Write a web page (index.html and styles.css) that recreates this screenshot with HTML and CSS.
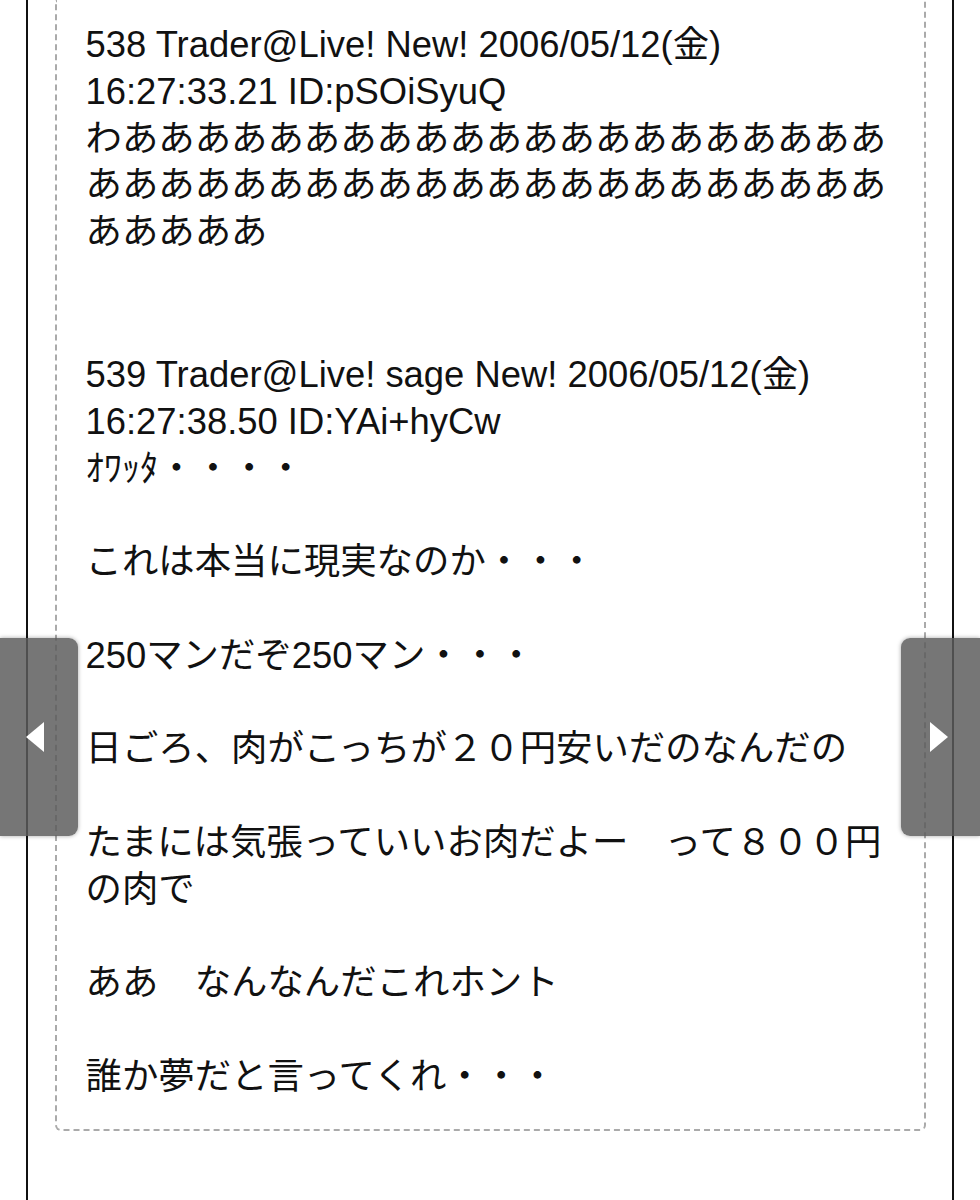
FILE: index.html
```html
<!DOCTYPE html>
<html lang="ja">
<head>
<meta charset="utf-8">
<title>538-539</title>
<link rel="stylesheet" href="styles.css">
</head>
<body>
<div class="frame">
  <div class="thread">
    <div class="post">
      <div class="head">538 Trader@Live! New! 2006/05/12(金) 16:27:33.21 ID:pSOiSyuQ</div>
      <div class="body">わああああああああああああああああああああああああああああああああああああああああああああああああ</div>
    </div>
    <div class="post post-next">
      <div class="head">539 Trader@Live! sage New! 2006/05/12(金) 16:27:38.50 ID:YAi+hyCw</div>
      <div class="body">ｵﾜｯﾀ・・・・<br><br>これは本当に現実なのか・・・<br><br>250マンだぞ250マン・・・<br><br>日ごろ、肉がこっちが２０円安いだのなんだの<br><br>たまには気張っていいお肉だよー　って８００円の肉で<br><br>ああ　なんなんだこれホント<br><br>誰か夢だと言ってくれ・・・</div>
    </div>
  </div>
</div>
<div class="nav nav-prev"><svg width="20" height="32" viewBox="0 0 20 32"><polygon points="1,16 19,1 19,31" fill="#fff"/></svg></div>
<div class="nav nav-next"><svg width="20" height="32" viewBox="0 0 20 32"><polygon points="19,16 1,1 1,31" fill="#fff"/></svg></div>
</body>
</html>
```
FILE: styles.css
```css
html, body {
  margin: 0;
  padding: 0;
  background: #fff;
}
body {
  font-family: "Liberation Sans", "Noto Sans CJK JP", sans-serif;
  font-size: 36.4px;
  line-height: 46.8px;
  color: #111;
  overflow: hidden;
  height: 1200px;
}
.frame {
  margin-left: 26px;
  width: 928px;
  box-sizing: border-box;
  min-height: 1200px;
  border-left: 2.5px solid #111;
  border-right: 2.5px solid #111;
  padding: 0 26px 0 26.5px;
}
.thread {
  border: 2px dashed #aaa;
  border-top: none;
  border-radius: 0 0 6px 6px;
  padding: 22px 28px 28px 29px;
}
.post-next {
  margin-top: 96px;
}
.nav {
  position: absolute;
  top: 638px;
  width: 78px;
  height: 198px;
  background: rgba(92, 92, 92, 0.84);
  box-shadow: 0 0 4px rgba(0, 0, 0, 0.35);
  display: flex;
  align-items: center;
  box-sizing: border-box;
}
.nav svg {
  display: block;
}
.nav-prev {
  left: 0;
  border-radius: 0 9px 9px 0;
  padding-left: 25px;
}
.nav-next {
  left: 901px;
  width: 79px;
  border-radius: 9px 0 0 9px;
  padding-left: 28px;
}
```
